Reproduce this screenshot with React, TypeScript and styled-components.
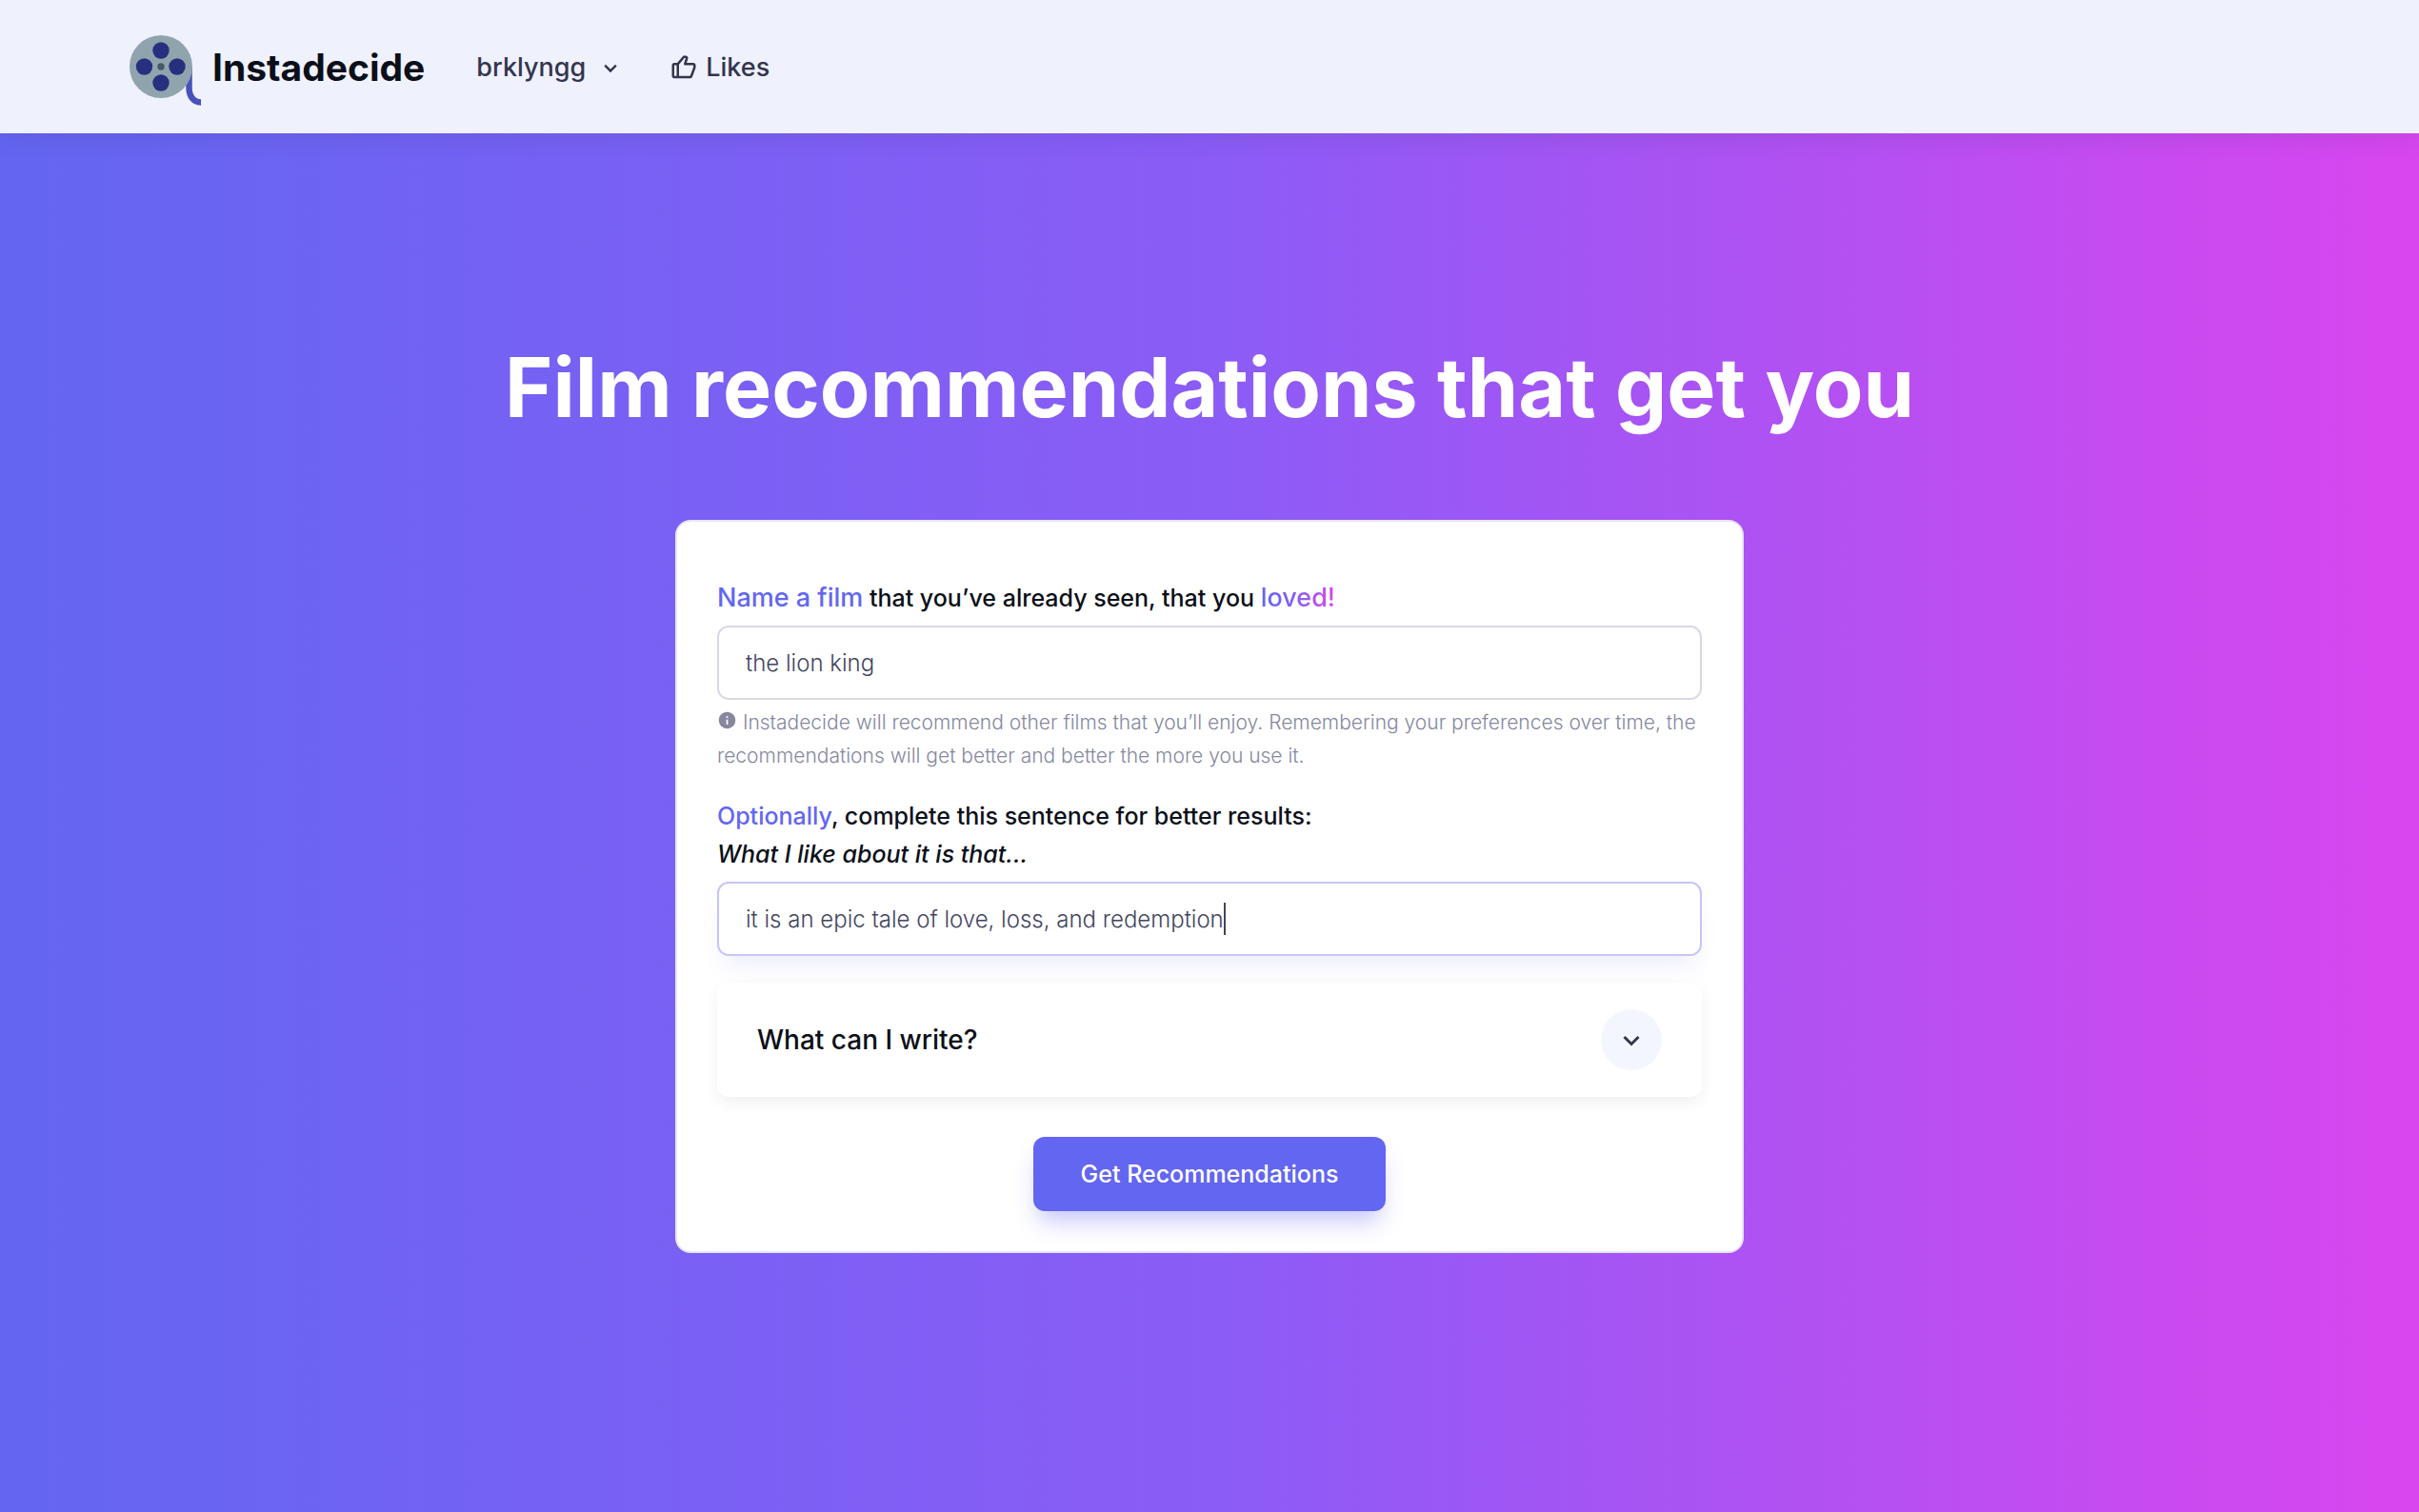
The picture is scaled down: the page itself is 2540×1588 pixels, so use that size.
import React, { useLayoutEffect, useRef, useState } from "react";
import styled, { createGlobalStyle, css } from "styled-components";
import { BiChevronDown, BiLike, BiSolidInfoCircle } from "react-icons/bi";

const GlobalStyle = createGlobalStyle`
  * { box-sizing: border-box; }
  body { margin: 0; font-family: Inter, "Liberation Sans", sans-serif; }
  button, input { font: inherit; }
`;

const Page = styled.div`
  min-height: 100vh;
  display: flex;
  flex-direction: column;
`;

const Header = styled.header`
  position: relative;
  display: flex;
  align-items: center;
  gap: 54px;
  padding: 31px 136px 29px;
  background: #eff1fd;
  box-shadow: 0 8px 20px rgba(60, 50, 120, 0.12);
`;

const Brand = styled.a`
  display: flex;
  align-items: center;
  gap: 12px;
  color: #0b0f19;
  font-size: 39px;
  font-weight: 700;
  line-height: 48px;
  text-decoration: none;
`;

const Nav = styled.nav`
  display: flex;
  align-items: center;
  gap: 48px;
`;

const navItem = css`
  display: flex;
  align-items: center;
  gap: 8px;
  padding: 0;
  border: 0;
  background: none;
  color: #33354d;
  font-size: 27px;
  font-weight: 500;
  line-height: 40px;
  text-decoration: none;
`;

const NavButton = styled.button`
  ${navItem}
  gap: 12px;
`;

const NavLink = styled.a`
  ${navItem}
`;

const Hero = styled.main`
  flex: 1;
  display: flex;
  flex-direction: column;
  align-items: center;
  gap: 84px;
  padding: 212px 40px;
  background: linear-gradient(90deg, #6366f1 0%, #8b5cf6 50%, #d946ef 100%);
`;

const Title = styled.h1`
  margin: 0;
  color: #fff;
  font-size: 86px;
  font-weight: 700;
  line-height: 110px;
  text-align: center;
`;

const Card = styled.form`
  display: flex;
  flex-direction: column;
  width: 100%;
  max-width: 1122px;
  padding: 60px 42px 42px;
  border: 2px solid #e6e6fb;
  border-radius: 16px;
  background: #fff;
`;

const Label = styled.label`
  margin-bottom: 9px;
  color: #0b0f19;
  font-size: 25px;
  font-weight: 500;
  line-height: 40px;
`;

const Accent = styled.span<{ $large?: boolean }>`
  color: #6366f1;
  font-size: ${(p) => (p.$large ? "27px" : "inherit")};
`;

const GradientText = styled.span`
  background: linear-gradient(90deg, #6366f1 0%, #8b5cf6 50%, #d946ef 100%);
  background-clip: text;
  color: transparent;
  font-size: 27px;
`;

const InputFrame = styled.div`
  position: relative;
  display: flex;
`;

const TextInput = styled.input<{ $active?: boolean }>`
  width: 100%;
  height: 78px;
  padding: 0 28px;
  border: 2px solid ${(p) => (p.$active ? "#c5c5fa" : "#d8d9e6")};
  border-radius: 12px;
  outline: 0;
  background: #fff;
  color: #42455f;
  font-size: 24px;
  font-weight: 300;
  line-height: 36px;
  caret-color: transparent;
  box-shadow: ${(p) => (p.$active ? "0 16px 24px -8px rgba(99, 102, 241, 0.12)" : "none")};
`;

const Caret = styled.span`
  position: absolute;
  top: 22px;
  width: 2px;
  height: 34px;
  background: #42455f;
`;

const Help = styled.p`
  margin: 6px 0 26px;
  color: #85889f;
  font-size: 21px;
  font-weight: 300;
  line-height: 35px;

  svg {
    vertical-align: -1px;
  }
`;

const Accordion = styled.button`
  position: relative;
  display: flex;
  align-items: center;
  justify-content: space-between;
  margin: 28px 0 42px;
  padding: 28px 42px;
  border: 0;
  border-radius: 12px;
  background: #fff;
  color: #0b0f19;
  font-size: 28px;
  font-weight: 500;
  line-height: 40px;
  box-shadow: 0 6px 16px rgba(0, 0, 0, 0.06);
`;

const RoundIcon = styled.span`
  display: grid;
  place-items: center;
  width: 64px;
  height: 64px;
  border-radius: 50%;
  background: #f3f6ff;
  color: #33354d;
`;

const Submit = styled.button`
  align-self: center;
  height: 78px;
  padding: 0 50px;
  border: 0;
  border-radius: 12px;
  background: #6366f1;
  color: #fff;
  font-size: 25px;
  font-weight: 500;
  line-height: 36px;
  box-shadow: 0 16px 24px -6px rgba(99, 102, 241, 0.38);
`;

function ReelLogo() {
  return (
    <svg width="75" height="80" viewBox="0 -6 75 80" aria-hidden="true">
      <path d="M62.5 33v22c0 9.500 5 15.500 12.500 15.500" fill="none" stroke="#4751bb" strokeWidth="6.500" />
      <circle cx="33" cy="33" r="33" fill="#90a4ae" />
      <g fill="#26307f">
        <circle cx="33" cy="16" r="8.700" />
        <circle cx="33" cy="50" r="8.700" />
        <circle cx="15.500" cy="33" r="8.700" />
        <circle cx="50" cy="33" r="8.700" />
      </g>
      <circle cx="33" cy="33" r="3.700" fill="#455a64" />
    </svg>
  );
}

function ReasonInput() {
  const [value, setValue] = useState("it is an epic tale of love, loss, and redemption");
  const [caretX, setCaretX] = useState(30);
  const input = useRef<HTMLInputElement>(null);

  useLayoutEffect(() => {
    const context = document.createElement("canvas").getContext("2d");
    if (!context || !input.current) return;
    const style = getComputedStyle(input.current);
    context.font = `${style.fontWeight} ${style.fontSize} ${style.fontFamily}`;
    setCaretX(30 + Math.ceil(context.measureText(value).width));
  }, [value]);

  return (
    <InputFrame>
      <TextInput
        id="reason"
        ref={input}
        $active
        value={value}
        onChange={(event) => setValue(event.target.value)}
      />
      <Caret style={{ left: caretX }} />
    </InputFrame>
  );
}

export default function App() {
  return (
    <Page>
      <GlobalStyle />
      <Header>
        <Brand href="#">
          <ReelLogo />
          Instadecide
        </Brand>
        <Nav>
          <NavButton type="button">
            brklyngg
            <BiChevronDown size={28} />
          </NavButton>
          <NavLink href="#likes">
            <BiLike size={30} />
            Likes
          </NavLink>
        </Nav>
      </Header>
      <Hero>
        <Title>Film recommendations that get you</Title>
        <Card onSubmit={(event) => event.preventDefault()}>
          <Label htmlFor="film">
            <Accent $large>Name a film</Accent> that you’ve already seen, that you{" "}
            <GradientText>loved!</GradientText>
          </Label>
          <InputFrame>
            <TextInput id="film" defaultValue="the lion king" />
          </InputFrame>
          <Help>
            <BiSolidInfoCircle size={21} /> Instadecide will recommend other films that you’ll
            enjoy. Remembering your preferences over time, the recommendations will get better and
            better the more you use it.
          </Help>
          <Label htmlFor="reason">
            <Accent>Optionally</Accent>, complete this sentence for better results:
            <br />
            <em>What I like about it is that...</em>
          </Label>
          <ReasonInput />
          <Accordion type="button" aria-expanded="false">
            What can I write?
            <RoundIcon>
              <BiChevronDown size={36} />
            </RoundIcon>
          </Accordion>
          <Submit type="submit">Get Recommendations</Submit>
        </Card>
      </Hero>
    </Page>
  );
}
